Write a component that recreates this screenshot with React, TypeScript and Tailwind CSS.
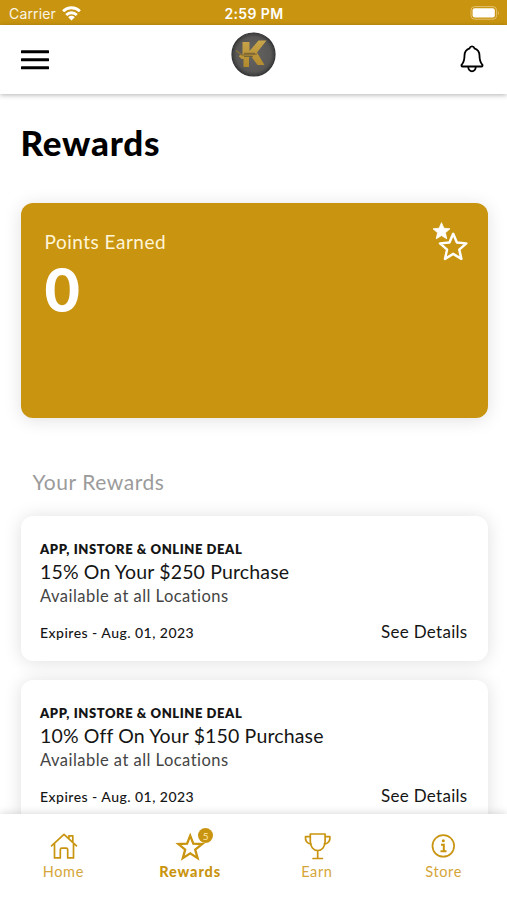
import type { ReactNode } from "react";

const deals = [
  {
    title: "15% On Your $250 Purchase",
    expires: "Expires - Aug. 01, 2023",
  },
  {
    title: "10% Off On Your $150 Purchase",
    expires: "Expires - Aug. 01, 2023",
  },
];

const STAR = "M12 1.8 15 8.8 22.6 9.5 16.9 14.5 18.6 22 12 18 5.4 22 7.1 14.5 1.4 9.5 9 8.8Z";

const StatusBar = () => (
  <div className="grid h-[25px] grid-cols-3 items-center bg-[#c9940f] pb-px pl-[9px] pr-[7px] font-['Inter',sans-serif] text-white">
    <div className="flex items-center gap-[6px] pt-[3px]">
      <span className="text-sm leading-5 tracking-[0.15px] text-white/90">Carrier</span>
      <svg width="19" height="15" viewBox="0 0 19 15" fill="none" stroke="white" strokeWidth="2.8" className="-mt-px">
        <path d="M1.1 5.2a12 12 0 0 1 16.8 0" />
        <path d="M4.2 8.9a7.6 7.6 0 0 1 10.6 0" />
        <path d="M9.5 14.4 6.2 11.2a4.6 4.6 0 0 1 6.6 0Z" fill="white" stroke="none" />
      </svg>
    </div>
    <span className="-ml-px pt-[3px] text-center text-[14px] font-semibold leading-5 tracking-[0.4px]">2:59 PM</span>
    <div className="flex justify-end pt-[2px]">
      <svg width="30" height="14" viewBox="0 0 30 14">
        <rect x="1" y="0.6" width="25.6" height="12.6" rx="3.6" fill="none" stroke="#e3c06e" />
        <rect x="2.6" y="2.3" width="22.2" height="9.2" rx="2" fill="white" />
        <path d="M28 4.8q1.8 2.2 0 4.4Z" fill="#e3c06e" />
      </svg>
    </div>
  </div>
);

const Logo = () => (
  <svg width="46" height="46" viewBox="0 0 46 46">
    <defs>
      <radialGradient id="coin">
        <stop offset="0" stopColor="#666460" />
        <stop offset="0.8" stopColor="#585756" />
        <stop offset="1" stopColor="#3c3c3c" />
      </radialGradient>
      <linearGradient id="gold" x1="0" y1="0" x2="0" y2="1">
        <stop offset="0" stopColor="#c8a44a" />
        <stop offset="1" stopColor="#b18a2c" />
      </linearGradient>
    </defs>
    <circle cx="22.5" cy="22.5" r="21.5" fill="url(#coin)" stroke="#333435" strokeWidth="1.2" />
    <path d="M11.5 10H18.5V19L27.5 8.5H35.5L26 20.5 33.5 33H26.5l-7-9.5-1.5 2.5v9H12.5V27H10.5l-3-3 4-2Z" fill="url(#gold)" />
    <path d="M5 18.5 11 23 26 22.2" fill="none" stroke="#8b7137" strokeWidth="1.3" />
    <path d="M13 21.3h11M13 24.4h9" stroke="#6b5a32" strokeWidth="0.9" />
  </svg>
);

const Header = () => (
  <header className="flex h-[69px] items-center justify-between bg-white px-[21px] shadow-[0_1px_5px_rgba(0,0,0,0.3)]">
    <svg width="28" height="20" viewBox="0 0 28 20">
      <path d="M1 1.8h26M1 9.8h26M1 17.8h26" stroke="black" strokeWidth="3" strokeLinecap="round" />
    </svg>
    <div className="-mt-[9px]">
      <Logo />
    </div>
    <svg width="28" height="30" viewBox="-1 0 28 30" className="-mt-[2px]" fill="none" stroke="black" strokeWidth="1.8" strokeLinejoin="round">
      <path d="M13 2.3c-1.4 0-2.1.8-2.4 2-3.3 1.1-5.1 3.8-5.1 7.3 0 4.6-.7 6.8-2.6 8.9-.9.9-.4 2 .7 2h18.8c1.1 0 1.6-1.1.7-2-1.9-2.1-2.6-4.3-2.6-8.9 0-3.5-1.8-6.2-5.1-7.3-.3-1.2-1-2-2.4-2Z" />
      <path d="M9.2 22.6a3.8 4.7 0 0 0 7.6 0" />
    </svg>
  </header>
);

const PointsCard = () => (
  <div className="mt-[41px] flex h-[215px] justify-between rounded-xl bg-[#c9940f] pl-6 pr-[19px] text-white shadow-[0_2px_18px_rgba(0,0,0,0.12)]">
    <div className="pt-[27px]">
      <p className="text-[19px] leading-6 tracking-[0.5px] text-[#fff5d8]">Points Earned</p>
      <p className="mt-[5px] text-[61px] font-black leading-[60px]">0</p>
    </div>
    <svg width="38" height="40" viewBox="0 0 38 40" className="mt-[18px]">
      <path d={STAR} fill="white" stroke="white" strokeWidth="1" strokeLinejoin="round" transform="translate(.9 .2) scale(.8)" />
      <path d={STAR} fill="none" stroke="white" strokeWidth="2" strokeLinejoin="round" transform="translate(7.3 10.6) scale(1.24)" />
    </svg>
  </div>
);

const DealCard = ({ deal }: { deal: (typeof deals)[number] }) => (
  <article className="h-[145px] rounded-xl bg-white pl-[19.5px] pr-5 pt-[23px] shadow-[0_1px_18px_rgba(0,0,0,0.13)]">
    <h3 className="text-[13px] font-extrabold leading-5 tracking-[0.57px] text-[#151515]">APP, INSTORE &amp; ONLINE DEAL</h3>
    <p className="mt-px whitespace-nowrap text-[19.5px] leading-6 tracking-[0.15px] text-[#151515]">{deal.title}</p>
    <p className="text-[16.5px] leading-6 tracking-[0.47px] text-[#444]">Available at all Locations</p>
    <div className="mt-3 flex items-baseline justify-between text-[#151515]">
      <span className="text-[14px] font-medium leading-6 tracking-[0.47px]">{deal.expires}</span>
      <span className="text-[17px] leading-6 tracking-[0.3px]">See Details</span>
    </div>
  </article>
);

const HomeIcon = () => (
  <svg width="30" height="30" viewBox="0 0 30 30" fill="none" stroke="#c9940f" strokeWidth="1.7" strokeLinejoin="round" strokeLinecap="round">
    <path d="m3.5 14.8 12.5-11.4 12.5 11.4M6.5 12.7v14.2h5.8v-8.2q0-1.6 1.6-1.6h4.2q1.6 0 1.6 1.6v8.2h5.8V12.7M20.9 7.3V4.8h3.9v6.2" />
  </svg>
);

const StarIcon = () => (
  <svg width="30" height="30" viewBox="0 0 30 30" fill="none" stroke="#c9940f" strokeWidth="2.3" strokeLinejoin="miter">
    <path d="m15.2 4.6 3.1 8 8.7.5-6.8 5.5 2.4 8.5-7.4-4.8-7.4 4.8 2.4-8.5-6.8-5.5 8.7-.5Z" />
  </svg>
);

const TrophyIcon = () => (
  <svg width="30" height="30" viewBox="0 0 30 30" fill="none" stroke="#c9940f" strokeWidth="1.7" strokeLinejoin="round" strokeLinecap="round">
    <path d="M8.3 3h14.8v7.5c0 5.2-3.1 9-7.4 9s-7.4-3.8-7.4-9ZM15.7 19.5v8M11 27.5h9.4M8.3 5.7H3.5c-.5 4 1.6 7.1 5.7 7.4M23.1 5.7h4.8c.5 4-1.6 7.1-5.7 7.4" />
  </svg>
);

const InfoIcon = () => (
  <svg width="30" height="30" viewBox="0 0 30 30" fill="none" stroke="#c9940f" strokeWidth="1.7">
    <circle cx="14.3" cy="14.9" r="10.8" />
    <circle cx="14.3" cy="9.8" r="1.5" fill="#c9940f" stroke="none" />
    <path d="M12 13.8h2.8v6M11.5 20.3h6" strokeWidth="2" />
  </svg>
);

const TabItem = ({ label, labelClass, badge, children }: { label: string; labelClass: string; badge?: string; children: ReactNode }) => (
  <div className="flex flex-col items-center">
    <div className="relative">
      {children}
      {badge && (
        <span className="absolute -top-[3px] left-[23px] flex h-[15px] w-[15px] items-center justify-center rounded-full bg-[#c9940f] text-[10px] leading-none text-[#ffe9ae]">
          {badge}
        </span>
      )}
    </div>
    <span className={`mt-px text-[14.5px] leading-5 ${labelClass}`}>{label}</span>
  </div>
);

const App = () => {
  return (
    <div className="flex h-[900px] w-[507px] flex-col overflow-hidden bg-white font-['Lato',sans-serif]">
      <StatusBar />
      <Header />
      <main className="min-h-0 flex-1 overflow-hidden pl-[20.5px] pr-[19.5px] pt-[29px]">
        <h1 className="text-[35px] font-black leading-[39px] tracking-[0.8px] text-black">Rewards</h1>
        <PointsCard />
        <h2 className="mt-[50px] pl-[12px] text-[21px] leading-7 tracking-[0.55px] text-[#9b9b9b]">Your Rewards</h2>
        <div className="mt-5 flex flex-col gap-[19px]">
          {deals.map((deal) => (
            <DealCard key={deal.title} deal={deal} />
          ))}
        </div>
      </main>
      <nav className="relative grid h-[86px] grid-cols-4 bg-white pt-[17px] text-[#c9940f] shadow-[0_-1px_8px_rgba(0,0,0,0.15)]">
        <TabItem label="Home" labelClass="tracking-[0.6px] text-[#d5a53a]">
          <HomeIcon />
        </TabItem>
        <TabItem label="Rewards" labelClass="font-black tracking-[0.9px]" badge="5">
          <StarIcon />
        </TabItem>
        <TabItem label="Earn" labelClass="tracking-[0.6px] text-[#d5a53a]">
          <TrophyIcon />
        </TabItem>
        <TabItem label="Store" labelClass="tracking-[0.6px] text-[#d5a53a]">
          <InfoIcon />
        </TabItem>
      </nav>
    </div>
  );
};

export default App;
